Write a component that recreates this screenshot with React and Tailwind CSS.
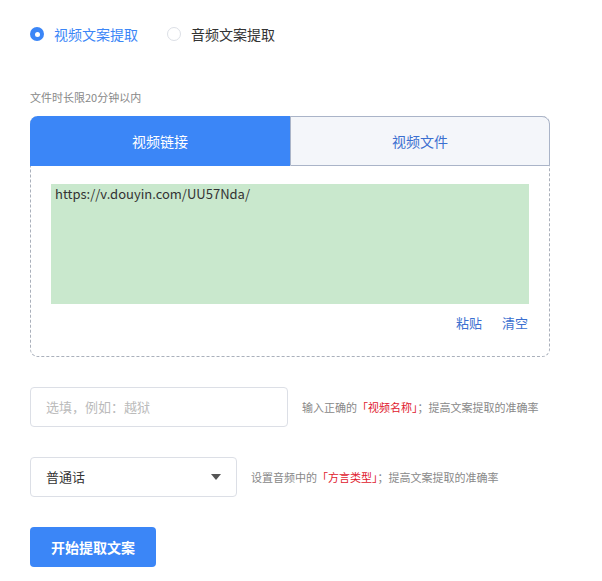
export default function App() {
  const f = { fontFamily: '"Noto Sans CJK SC","Noto Sans",sans-serif' };
  return (
    <div className="bg-white w-[602px] h-[581px] pl-[30px] pt-[24px]" style={f}>
      <div className="flex items-center h-[20px] text-[14px]">
        <span className="w-[14px] h-[14px] rounded-full bg-[#3b86f7] flex items-center justify-center"><span className="w-[5px] h-[5px] rounded-full bg-white" /></span>
        <span className="ml-[10px] text-[#3b86f7]">视频文案提取</span>
        <span className="ml-[29px] w-[14px] h-[14px] rounded-full border border-[#dcdfe6]" />
        <span className="ml-[10px] text-[#333]">音频文案提取</span>
      </div>
      <div className="mt-[45px] text-[11px] text-[#888] leading-[16px]">文件时长限20分钟以内</div>
      <div className="mt-[11px] w-[520px] h-[241px] rounded-[8px] border border-dashed border-[#aab0bb]">
        <div className="flex h-[50px] text-[14px] -m-px">
          <div className="w-[260px] bg-[#3b86f7] text-white rounded-tl-[8px] flex items-center justify-center">视频链接</div>
          <div className="flex-1 bg-[#f4f6fa] text-[#3b6fd0] border border-[#aab4c8] rounded-tr-[8px] flex items-center justify-center">视频文件</div>
        </div>
        <div className="mx-[20px] mt-[19px] h-[120px] bg-[#c9e8cd] px-[4px] pt-[1px] text-[13px] text-[#333] leading-[18px]">https://v.douyin.com/UU57Nda/</div>
        <div className="flex justify-end gap-[20px] mr-[21px] mt-[9px] text-[13px] text-[#3b6fd0]"><span>粘贴</span><span>清空</span></div>
      </div>
      <div className="mt-[30px] flex items-center">
        <div className="w-[258px] h-[40px] border border-[#dcdfe6] rounded-[4px] flex items-center px-[15px] text-[13px] text-[#bbb]">选填，例如：越狱</div>
        <div className="ml-[14px] text-[11px] text-[#888]">输入正确的<span className="text-[#e0182d]">「视频名称」</span>；提高文案提取的准确率</div>
      </div>
      <div className="mt-[30px] flex items-center">
        <div className="w-[207px] h-[40px] border border-[#dcdfe6] rounded-[4px] flex items-center justify-between px-[15px] text-[13px] text-[#333]">
          <span>普通话</span>
          <svg width="10" height="6" viewBox="0 0 10 6"><path d="M0 0h10L5 6z" fill="#555" /></svg>
        </div>
        <div className="ml-[14px] text-[11px] text-[#888]">设置音频中的<span className="text-[#e0182d]">「方言类型」</span>；提高文案提取的准确率</div>
      </div>
      <button className="mt-[30px] w-[126px] h-[40px] bg-[#3b86f7] text-white rounded-[4px] text-[14px] font-bold">开始提取文案</button>
    </div>
  );
}
